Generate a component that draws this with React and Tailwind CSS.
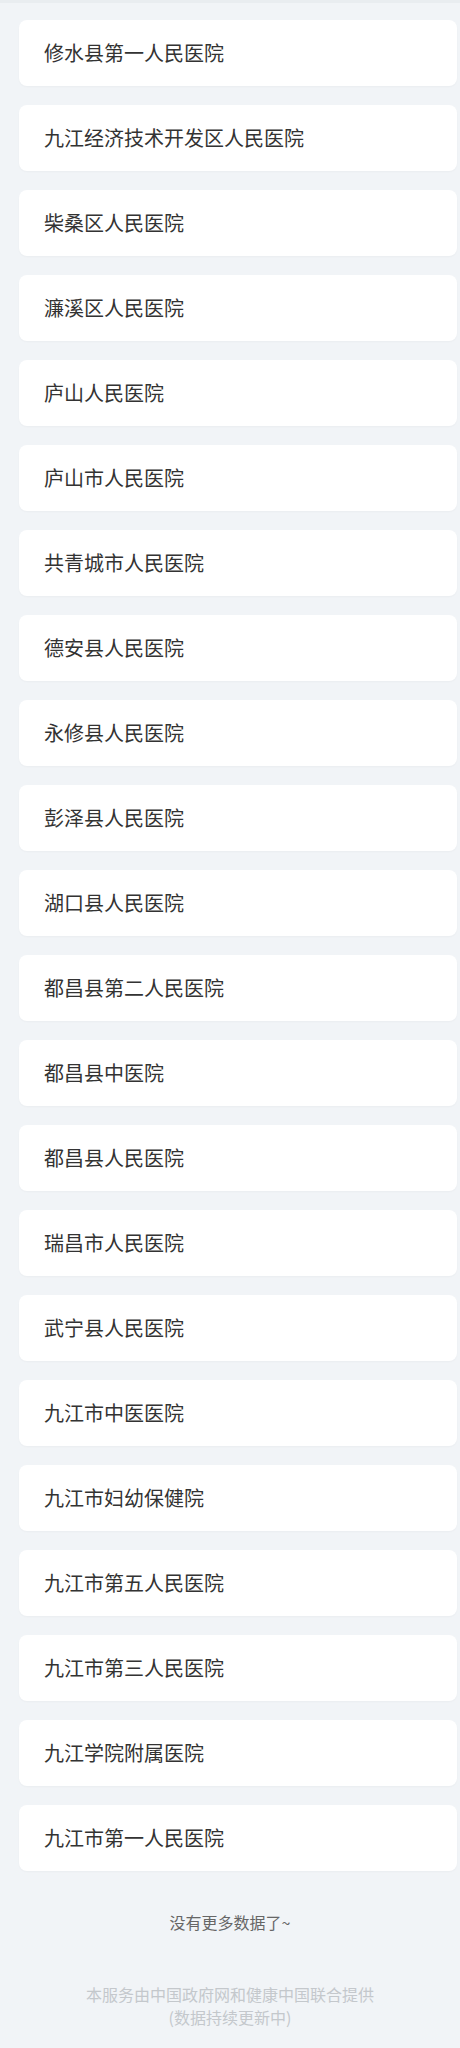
const HOSPITALS = [
  "修水县第一人民医院",
  "九江经济技术开发区人民医院",
  "柴桑区人民医院",
  "濂溪区人民医院",
  "庐山人民医院",
  "庐山市人民医院",
  "共青城市人民医院",
  "德安县人民医院",
  "永修县人民医院",
  "彭泽县人民医院",
  "湖口县人民医院",
  "都昌县第二人民医院",
  "都昌县中医院",
  "都昌县人民医院",
  "瑞昌市人民医院",
  "武宁县人民医院",
  "九江市中医医院",
  "九江市妇幼保健院",
  "九江市第五人民医院",
  "九江市第三人民医院",
  "九江学院附属医院",
  "九江市第一人民医院",
];

const font = { fontFamily: '"Noto Sans CJK SC", "Noto Sans", sans-serif' };

export default function App() {
  return (
    <div className="w-[460px] min-h-[2048px] bg-[#f1f4f7] border-t-[3px] border-[#e9edf0]" style={font}>
      <div className="flex flex-col gap-[19px] pt-[17px] pl-[19px] pr-[3px]">
        {HOSPITALS.map((name) => (
          <div
            key={name}
            className="h-[66px] bg-white rounded-lg flex items-center pl-[25px] shadow-[0_1px_2px_rgba(0,0,0,0.03)]"
          >
            <span className="text-[20px] leading-none text-[#333333]">{name}</span>
          </div>
        ))}
      </div>
      <div className="pt-[39px] text-center text-[16px] leading-[24px] text-[#666666]">
        没有更多数据了~
      </div>
      <div className="pt-[49px] text-center text-[16px] leading-[23px] text-[#c4c8cc]">
        本服务由中国政府网和健康中国联合提供
        <br />
        (数据持续更新中)
      </div>
    </div>
  );
}
